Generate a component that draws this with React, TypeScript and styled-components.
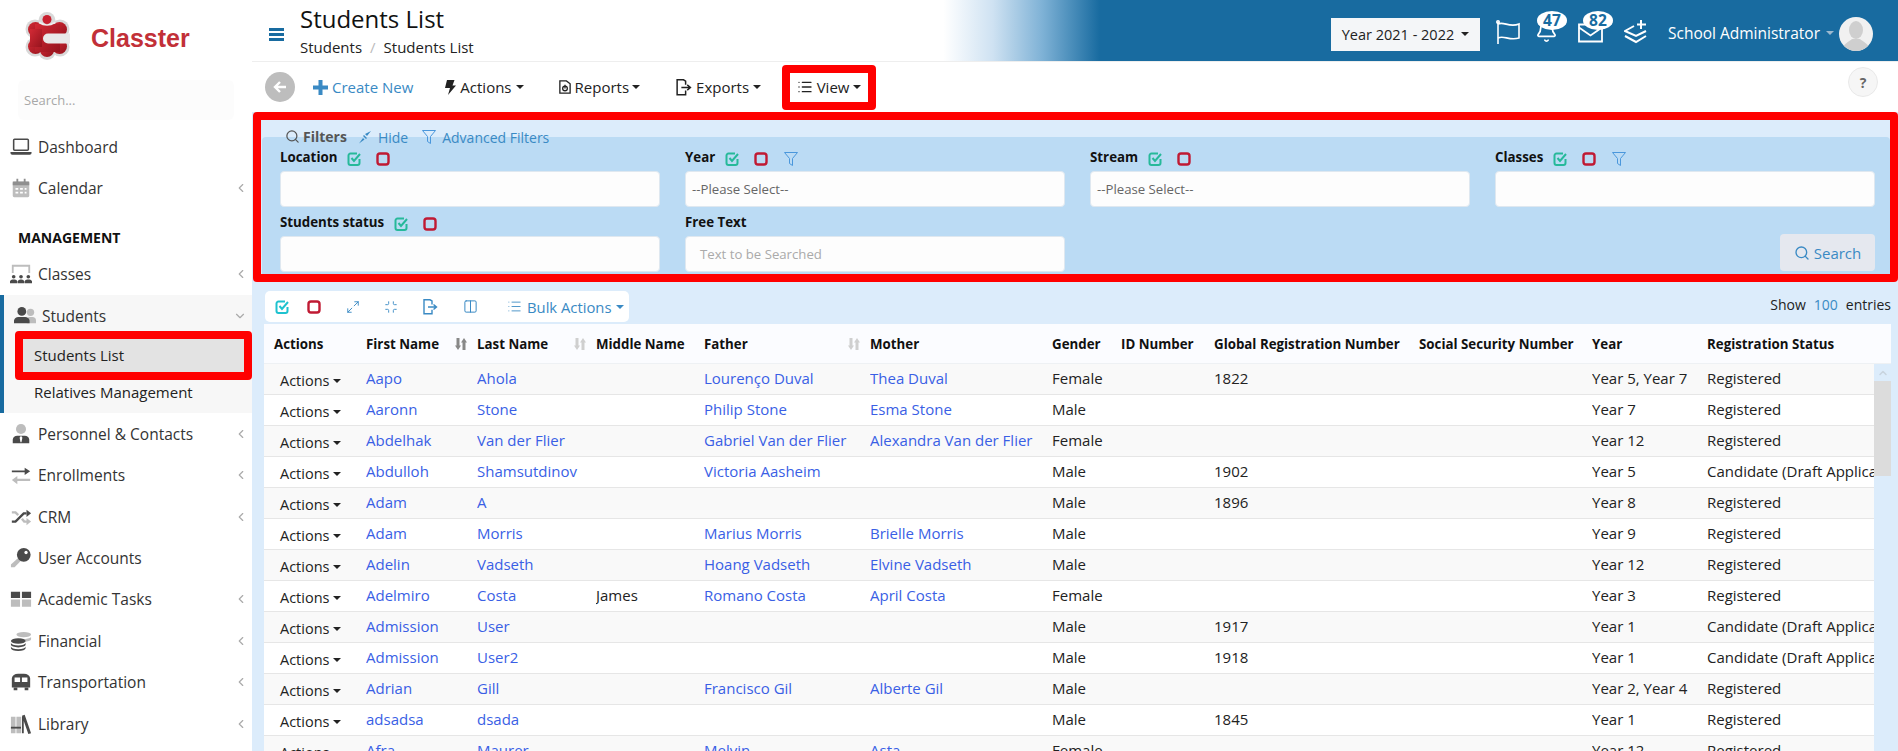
import * as React from 'react'
import styled, { createGlobalStyle } from 'styled-components'
import {
  Bell,
  ChevronDown,
  ChevronLeft,
  ChevronUp,
  Columns2,
  List,
  Maximize2,
  Minimize,
  Search as SearchIcon,
} from 'lucide-react'

const DARK = '#4a4a4a'
const LIGHT = '#bdbdbd'
const BLUE = '#186ba0'
const SKY = '#dcecfb'
const LINKY = '#3a8ac4'

const GlobalStyle = createGlobalStyle`
  html, body { margin: 0; padding: 0; height: 100%; overflow: hidden; }
  body { font-family: "Open Sans", "Liberation Sans", sans-serif; font-size: 14px; color: #222; background: #fff; }
  * { box-sizing: border-box; }
`

const Page = styled.div`
  display: flex;
  width: 1898px;
  height: 751px;
  overflow: hidden;
`

/* ---------- sidebar ---------- */

const Sidebar = styled.aside`
  flex: 0 0 252px;
  background: #fff;
  display: flex;
  flex-direction: column;
`

const Brand = styled.div`
  height: 80px;
  padding: 12px 0 0 25px;
  display: flex;
  align-items: flex-start;
  gap: 21px;
`

const BrandName = styled.span`
  font-family: "Liberation Sans", Arial, sans-serif;
  font-weight: 700;
  font-size: 25px;
  line-height: 52px;
  color: #c23038;
`

const SideSearch = styled.div`
  margin: 0 18px 6px;
  height: 40px;
  border-radius: 6px;
  background: #fcfcfc;
  padding-left: 6px;
  display: flex;
  align-items: center;
  color: #a8a8a8;
  font-size: 13px;
`

const NavItem = styled.div`
  height: 41.4px;
  display: flex;
  align-items: center;
  padding: 0 4px 0 10px;
  font-size: 15.5px;
  color: #333;
`

const NavIcon = styled.svg`
  flex: 0 0 22px;
  width: 22px;
  height: 22px;
  margin-right: 6px;
`

const NavArrow = styled.span`
  margin-left: auto;
  display: flex;
  color: #aaa;
`

const NavHeading = styled.div`
  height: 45px;
  padding: 0 0 7px 18px;
  display: flex;
  align-items: flex-end;
  font-size: 14px;
  font-weight: 700;
  color: #111;
`

const NavGroup = styled.div`
  height: 118px;
  background: #f7f7f7;
  border-left: 4px solid ${BLUE};
`

const GroupHead = styled.div`
  height: 36px;
  display: flex;
  align-items: center;
  padding: 6px 5px 0 10px;
  font-size: 15.5px;
  color: #333;
`

const ActiveSub = styled.div`
  margin-left: 11px;
  width: 237px;
  height: 49px;
  border: 8px solid #f00;
  border-radius: 4px;
  background: #e3e3e3;
  display: flex;
  align-items: center;
  padding: 0 0 2px 11px;
  font-size: 15px;
  color: #222;
`

const SubItem = styled.div`
  height: 33px;
  padding: 0 0 9px 30px;
  display: flex;
  align-items: center;
  font-size: 15px;
  color: #222;
`

/* ---------- top bar ---------- */

const Main = styled.main`
  flex: 1;
  min-width: 0;
  background: ${SKY};
  display: flex;
  flex-direction: column;
`

const TopBar = styled.header`
  height: 62px;
  flex: none;
  display: flex;
  align-items: center;
  padding: 0 25px 1px 17px;
  border-bottom: 1px solid #eee;
  background: linear-gradient(90deg, #fff 42%, #cfe2f2 45%, #7fb2d6 48%, ${BLUE} 51.5%);
`

const Burger = styled.span`
  width: 15px;
  height: 13px;
  margin: 8px 16px 0 0;
  border-top: 3px solid ${BLUE};
  border-bottom: 3px solid ${BLUE};
  position: relative;
  &::after {
    content: '';
    position: absolute;
    left: 0;
    right: 0;
    top: 2px;
    height: 3px;
    background: ${BLUE};
  }
`

const TitleBlock = styled.div`
  align-self: flex-start;
  display: flex;
  flex-direction: column;
`

const PageTitle = styled.h1`
  margin: 0;
  font-size: 24px;
  line-height: 38px;
  font-weight: 400;
  color: #111;
`

const Crumbs = styled.div`
  display: flex;
  font-size: 15px;
  line-height: 20px;
  color: #222;
  margin-top: -1px;
`

const CrumbSep = styled.span`
  color: #bbb;
  margin: 0 8px;
`

const YearSelect = styled.div`
  margin-left: auto;
  width: 149px;
  height: 33px;
  background: #f4f6f8;
  display: flex;
  align-items: center;
  justify-content: center;
  gap: 7px;
  color: #222;
  font-size: 14.5px;
  margin-top: 8px;
`

const Caret = styled.span<{ $color?: string }>`
  display: inline-block;
  width: 0;
  height: 0;
  border-left: 4px solid transparent;
  border-right: 4px solid transparent;
  border-top: 4px solid ${(p) => p.$color || '#222'};
`

const HeadIcon = styled.div<{ $w: number; $ml: number }>`
  position: relative;
  width: ${(p) => p.$w}px;
  height: 24px;
  margin-left: ${(p) => p.$ml}px;
  margin-top: 4px;
  color: #fff;
`

const Badge = styled.span<{ $left: number }>`
  position: absolute;
  left: ${(p) => p.$left}px;
  top: -9px;
  width: 30px;
  height: 19px;
  border-radius: 50%;
  background: #fff;
  color: ${BLUE};
  font-weight: 700;
  font-size: 15.5px;
  line-height: 19px;
  text-align: center;
`

const UserName = styled.span`
  margin: 5px 0 0 20px;
  font-size: 15.5px;
  color: #fff;
  display: flex;
  align-items: center;
  gap: 6px;
  white-space: nowrap;
`

const Avatar = styled.div`
  width: 34px;
  height: 34px;
  margin-left: 5px;
  border-radius: 50%;
  background: #f1f1f1;
  overflow: hidden;
  margin-top: 8px;
`

/* ---------- tool bar ---------- */

const ToolBar = styled.div`
  height: 50px;
  flex: none;
  background: #fff;
  display: flex;
  align-items: center;
  padding-left: 13px;
`

const BackButton = styled.span`
  width: 30px;
  height: 30px;
  border-radius: 50%;
  background: #bdbdbd;
  display: flex;
  align-items: center;
  justify-content: center;
  margin-right: 18px;
`

const ToolItem = styled.span<{ $after: number; $gap?: number; $link?: boolean }>`
  display: inline-flex;
  align-items: center;
  gap: ${(p) => p.$gap || 4}px;
  margin-right: ${(p) => p.$after}px;
  font-size: 15px;
  color: ${(p) => (p.$link ? LINKY : '#222')};
  white-space: nowrap;
`

const ViewBox = styled.div`
  width: 94px;
  height: 45px;
  border: 8px solid #f00;
  border-radius: 4px;
  background: #fff;
  display: flex;
  align-items: center;
  justify-content: center;
  gap: 4px;
  font-size: 15px;
  color: #222;
`

const HelpDot = styled.span`
  margin: 5px 20px 0 auto;
  align-self: flex-start;
  width: 30px;
  height: 30px;
  border-radius: 50%;
  background: #f6f6f6;
  border: 1px solid #e9e9e9;
  display: flex;
  align-items: center;
  justify-content: center;
  font-weight: 700;
  color: #666;
  font-size: 14px;
`

/* ---------- filters ---------- */

const FilterBox = styled.section`
  height: 170px;
  flex: none;
  margin-left: 1px;
  border: 8px solid #f00;
  border-radius: 4px;
  background: ${SKY};
  display: flex;
  flex-direction: column;
`

const FilterTabs = styled.div`
  height: 25px;
  flex: none;
  margin-top: 0;
  padding: 7px 0 0 24px;
  display: flex;
  align-items: center;
  position: relative;
  z-index: 1;
`

const FiltersLabel = styled.span`
  display: inline-flex;
  align-items: center;
  gap: 3px;
  font-weight: 700;
  font-size: 14px;
  color: #555;
`

const TabLink = styled.span<{ $ml: number }>`
  display: inline-flex;
  align-items: center;
  gap: 6px;
  margin-left: ${(p) => p.$ml}px;
  margin-top: 2px;
  font-size: 14px;
  color: ${LINKY};
`

const FilterPanel = styled.div`
  flex: 1;
  margin: -8px 0 0 1px;
  padding: 10px 15px 1px 18px;
  background: #bbdbf4;
  border-radius: 4px 4px 0 0;
  display: grid;
  grid-template-columns: repeat(4, 1fr);
  column-gap: 25px;
  row-gap: 5px;
  align-content: start;
`

const Field = styled.div`
  display: flex;
  flex-direction: column;
  min-width: 0;
`

const FieldHead = styled.div`
  height: 20px;
  margin-bottom: 4px;
  display: flex;
  align-items: center;
  font-weight: 700;
  font-size: 13.3px;
  color: #111;
`

const IconSlot = styled.span<{ $ml: number }>`
  display: inline-flex;
  margin-left: ${(p) => p.$ml}px;
  margin-top: 4px;
`

const Input = styled.div`
  height: 36px;
  border-radius: 4px;
  background: #fdfdfd;
  border: 1px solid #dfe8f0;
  display: flex;
  align-items: center;
  font-size: 13.2px;
`

const Placeholder = styled.span<{ $pl: number; $color: string }>`
  padding-left: ${(p) => p.$pl}px;
  color: ${(p) => p.$color};
`

const SearchButton = styled.span`
  align-self: flex-end;
  margin: auto 0 1px;
  width: 95px;
  height: 37px;
  border-radius: 4px;
  background: #e5e8ef;
  display: flex;
  align-items: center;
  justify-content: center;
  gap: 4px;
  font-size: 15px;
  color: ${LINKY};
`

/* ---------- table ---------- */

const ListTools = styled.div`
  flex: none;
  margin-top: 9px;
  padding: 0 7px 0 13px;
  height: 33px;
  display: flex;
  align-items: flex-start;
`

const ToolCard = styled.div`
  width: 364px;
  height: 31px;
  background: #fff;
  border-radius: 5px;
  padding-left: 10px;
  display: flex;
  align-items: center;
  color: ${LINKY};
`

const CardIcon = styled.span<{ $w: number }>`
  width: ${(p) => p.$w}px;
  display: inline-flex;
`

const BulkLabel = styled.span`
  display: inline-flex;
  align-items: center;
  gap: 5px;
  font-size: 14.8px;
`

const ShowEntries = styled.div`
  margin-left: auto;
  font-size: 14px;
  line-height: 28px;
  color: #222;
  display: flex;
  gap: 8px;
`

const ShowCount = styled.span`
  color: ${LINKY};
`

const TableWrap = styled.div`
  flex: 1;
  min-height: 0;
  margin: 0 7px 0 12px;
  display: flex;
  flex-direction: column;
`

const COLS = '102px 111px 119px 108px 166px 182px 69px 93px 205px 173px 115px 167px'

const HeaderRow = styled.div`
  flex: none;
  height: 40px;
  display: grid;
  grid-template-columns: ${COLS};
  background: #fbfcff;
  border-bottom: 1px solid #eef1f4;
  font-weight: 700;
  font-size: 13.3px;
  color: #111;
`

const HeadCell = styled.div<{ $pl?: number }>`
  display: flex;
  align-items: center;
  justify-content: space-between;
  padding: 0 10px 0 ${(p) => p.$pl || 0}px;
  white-space: nowrap;
`

const BodyWrap = styled.div`
  flex: 1;
  min-height: 0;
  display: flex;
  overflow: hidden;
`

const Rows = styled.div`
  width: 1610px;
  flex: none;
  overflow: hidden;
`

const Row = styled.div<{ $odd: boolean }>`
  height: 31px;
  display: grid;
  grid-template-columns: ${COLS};
  align-items: center;
  background: ${(p) => (p.$odd ? '#f9f9f9' : '#fff')};
  border-bottom: 1px solid #e6e6e6;
  font-size: 15px;
  color: #222;
`

const Cell = styled.div`
  white-space: nowrap;
  overflow: hidden;
  padding-bottom: 2px;
`

const LinkCell = styled(Cell)`
  color: #3a5fe5;
`

const ActionCell = styled.div`
  padding: 3px 0 0 16px;
  display: flex;
  align-items: center;
  gap: 4px;
  font-size: 14.5px;
  color: #222;
`

const ScrollTrack = styled.div`
  flex: 1;
  background: ${SKY};
  display: flex;
  flex-direction: column;
`

const ScrollUp = styled.span`
  height: 17px;
  display: flex;
  align-items: center;
  justify-content: center;
  color: #c8d4de;
`

const ScrollThumb = styled.div`
  height: 95px;
  background: #dcdcdc;
`

const Glyph = styled.svg<{ $w?: number }>`
  width: ${(p) => p.$w || 14}px;
  height: ${(p) => p.$w || 14}px;
  flex: none;
`

const BoltGlyph = styled.svg`
  width: 11px;
  height: 15px;
  flex: none;
`

/* ---------- drawn icons ---------- */

const Logo = () => (
  <svg width="45" height="48" viewBox="0 0 45 48">
    <defs>
      <linearGradient id="lg" x1="0" y1="0" x2="1" y2="1">
        <stop offset="0" stopColor="#d22a35" />
        <stop offset="1" stopColor="#96141e" />
      </linearGradient>
    </defs>
    <g fill="#d9d9d9">
      <circle cx="22" cy="8.500" r="8.500" />
      <circle cx="10" cy="17" r="9.500" />
      <circle cx="35" cy="17" r="9.500" />
      <circle cx="10" cy="35" r="9.500" />
      <circle cx="35" cy="35" r="9.500" />
      <circle cx="22" cy="39" r="9" />
      <rect x="5" y="12" width="34" height="26" />
    </g>
    <g fill="url(#lg)">
      <circle cx="10.500" cy="17.500" r="7.500" />
      <circle cx="34.500" cy="17.500" r="7.500" />
      <circle cx="10.500" cy="34.500" r="7.500" />
      <circle cx="34.500" cy="34.500" r="7.500" />
      <circle cx="22" cy="38" r="7" />
      <rect x="10" y="12" width="25" height="28" />
      <rect x="5" y="17" width="12" height="18" />
    </g>
    <path d="M14 10.500 q8 5 16 0" fill="none" stroke="#eee" strokeWidth="1.600" />
    <circle cx="22" cy="7.500" r="4.500" fill="#c8202f" />
    <path d="M45 21.500 H23 a5 5 0 0 0 0 10 H45 Z" fill="#e9e9e9" />
  </svg>
)

const icons: Record<string, React.ReactNode> = {
  laptop: (
    <>
      <rect x="4" y="3.500" width="16" height="12" rx="1" fill="none" stroke={DARK} strokeWidth="1.700" />
      <path d="M0.500 17.500 h23 v1 a2 2 0 0 1 -2 2 h-19 a2 2 0 0 1 -2 -2 z" fill={DARK} />
    </>
  ),
  calendar: (
    <>
      <rect x="3" y="5" width="18" height="17" rx="1.500" fill={LIGHT} />
      <path d="M3 5 h18 v4 h-18 z" fill="#8f8f8f" />
      <path d="M7 2 h2 v5 h-2 z M15 2 h2 v5 h-2 z" fill="#8f8f8f" />
      <path d="M6 12 h3 v2 h-3 z M11 12 h3 v2 h-3 z M16 12 h2 v2 h-2 z M6 16 h3 v2 h-3 z M11 16 h3 v2 h-3 z M16 16 h2 v2 h-2 z" fill="#fff" />
    </>
  ),
  classes: (
    <>
      <path d="M3 11 v-8 h18 v8" fill="none" stroke={LIGHT} strokeWidth="2" />
      <circle cx="4" cy="15" r="2" fill={DARK} />
      <circle cx="12" cy="15" r="2" fill={DARK} />
      <circle cx="20" cy="15" r="2" fill={DARK} />
      <path d="M0 22 v-2 a3 3 0 0 1 3 -2 h2 a3 3 0 0 1 3 2 v2 z M8.500 22 v-2 a3 3 0 0 1 3 -2 h1 a3 3 0 0 1 3 2 v2 z M16 22 v-2 a3 3 0 0 1 3 -2 h2 a3 3 0 0 1 3 2 v2 z" fill={DARK} />
    </>
  ),
  students: (
    <>
      <circle cx="18" cy="8" r="4" fill={LIGHT} />
      <path d="M14 20 v-3 a4 4 0 0 1 2 -4 h4 a4 4 0 0 1 4 4 v3 z" fill={LIGHT} />
      <circle cx="8.500" cy="7" r="4.800" fill={DARK} />
      <path d="M0 20 v-3 a5 5 0 0 1 5 -4 h7 a5 5 0 0 1 5 4 v3 z" fill={DARK} />
    </>
  ),
  personnel: (
    <>
      <circle cx="12" cy="6.500" r="5.500" fill={LIGHT} />
      <path d="M3 22 v-4 a5 5 0 0 1 5 -4 h8 a5 5 0 0 1 5 4 v4 z" fill={DARK} />
      <path d="M12 14 l1.500 2 -1 5 h-1 l-1 -5 z" fill="#fff" />
    </>
  ),
  enrollments: (
    <>
      <path d="M2 7 h14 v-3 l6 4 -6 4 v-3 h-14 z" fill={DARK} />
      <path d="M22 16 h-14 v-3 l-6 4.500 6 4.500 v-3.500 h14 z" fill={LIGHT} />
    </>
  ),
  crm: (
    <>
      <path d="M2 7 h4 l3 3 M13 14 l2.500 3 h3" fill="none" stroke={LIGHT} strokeWidth="2.600" />
      <path d="M18 13 l5 4 -5 4 z" fill={LIGHT} />
      <path d="M2 17 h4 l9 -9 h3" fill="none" stroke={DARK} strokeWidth="2.600" />
      <path d="M18 4 l5 4 -5 4 z" fill={DARK} />
    </>
  ),
  key: (
    <>
      <path d="M10 11 l3 3 -8 8 h-4 v-3 z" fill={LIGHT} />
      <circle cx="15" cy="8.500" r="7.500" fill={DARK} />
      <circle cx="17.500" cy="6" r="1.800" fill="#fff" />
    </>
  ),
  tasks: (
    <>
      <path d="M1 4 h10 v7 h-10 z M13 4 h10 v7 h-10 z" fill={DARK} />
      <path d="M1 12.500 h10 v8 h-10 z M13 12.500 h10 v8 h-10 z" fill={LIGHT} />
    </>
  ),
  coins: (
    <>
      <ellipse cx="15" cy="5" rx="8" ry="2.800" fill={LIGHT} />
      <path d="M10 9 a8 3 0 0 0 13 -1 v2 a8 3 0 0 1 -8 3 z" fill={LIGHT} />
      <ellipse cx="9" cy="12" rx="8" ry="3" fill={DARK} />
      <path d="M1 14 a8 3 0 0 0 16 0 v2 a8 3 0 0 1 -16 0 z M1 18 a8 3 0 0 0 16 0 v2 a8 3 0 0 1 -16 0 z" fill={DARK} />
    </>
  ),
  bus: (
    <>
      <path d="M2 8 a7 6 0 0 1 7 -5 h6 a7 6 0 0 1 7 5 v10 h-20 z" fill={DARK} />
      <path d="M5 7 h6 v5 h-6 z M13 7 h6 v5 h-6 z" fill="#fff" />
      <path d="M4 18 h4 v3 h-4 z M16 18 h4 v3 h-4 z" fill={DARK} />
    </>
  ),
  library: (
    <>
      <path d="M1 4 h5 v18 h-5 z M7 4 h5 v18 h-5 z" fill={LIGHT} />
      <path d="M1 15 h11 v2 h-11 z" fill={DARK} />
      <path d="M13 3 l3 -1 7 20 -3 1 z M13 4 h2 v18 h-2 z" fill={DARK} />
    </>
  ),
}

const SideIcon = ({ name }: { name: string }) => <NavIcon viewBox="0 0 24 24">{icons[name]}</NavIcon>

const CheckMark = ({ color = '#26b99a' }: { color?: string }) => (
  <Glyph viewBox="0 0 14 14" fill="none">
    <path d="M12.500 7 v4 a2 2 0 0 1 -2 2 h-7 a2 2 0 0 1 -2 -2 v-7.500 a2 2 0 0 1 2 -2 h6.500" stroke={color} strokeWidth="2" />
    <path d="M4.500 6 l2.500 3 l6 -7" stroke={color} strokeWidth="2" />
  </Glyph>
)

const RedBox = () => (
  <Glyph viewBox="0 0 14 14" fill="none">
    <rect x="1.500" y="1.500" width="11" height="11" rx="2.500" stroke="#c01a33" strokeWidth="2.400" />
  </Glyph>
)

const Funnel = ({ color = '#4a97dc', size = 14 }: { color?: string; size?: number }) => (
  <Glyph $w={size} viewBox="0 0 14 14" fill="none">
    <path d="M0.500 0.500 h13 l-5 6 v7 l-3 -2 v-5 z" stroke={color} strokeWidth="1" />
  </Glyph>
)

const SortArrows = ({ color = '#cfcfcf' }: { color?: string }) => (
  <Glyph $w={12} viewBox="0 0 12 12" fill={color}>
    <path d="M1.500 0 h3 v7.500 h1.500 l-3 4.500 -3 -4.500 h1.500 z" />
    <path d="M7.500 12 h3 v-7.500 h1.500 l-3 -4.500 -3 4.500 h1.500 z" />
  </Glyph>
)

const Pin = () => (
  <Glyph viewBox="0 0 14 14" fill={LINKY}>
    <path d="M13 1 l-4 5 -2 -2 z M6 5 l3 3 -1 1 -3 -3 z M5 8 l1.500 1.500 -5.500 4 z" />
  </Glyph>
)

const FileExport = ({ color = '#222', size = 17 }: { color?: string; size?: number }) => (
  <Glyph $w={size} viewBox="0 0 16 16" fill="none" stroke={color} strokeWidth="1.400">
    <path d="M10 5.500 V2 l-2 -1.200 h-6 v14 h8 v-4" />
    <path d="M6 8 h8 M11.500 5.500 l3 2.500 -3 2.500" />
  </Glyph>
)

const ReportFile = () => (
  <Glyph $w={14} viewBox="0 0 15 15" fill="none" stroke="#222" strokeWidth="1.400">
    <path d="M2 1 h7 l4 3 v10 h-11 z" />
    <circle cx="7.500" cy="9" r="2.500" />
    <path d="M7.500 9 v-4" />
  </Glyph>
)

const Bolt = () => (
  <BoltGlyph viewBox="0 0 11 15" fill="#222">
    <path d="M2 0 h7.500 l-2 5.500 h3.500 l-8 9.500 2 -7 h-5 z" />
  </BoltGlyph>
)

const rowsData: string[][] = [
  ['Aapo', 'Ahola', '', 'Lourenço Duval', 'Thea Duval', 'Female', '', '1822', '', 'Year 5, Year 7', 'Registered'],
  ['Aaronn', 'Stone', '', 'Philip Stone', 'Esma Stone', 'Male', '', '', '', 'Year 7', 'Registered'],
  ['Abdelhak', 'Van der Flier', '', 'Gabriel Van der Flier', 'Alexandra Van der Flier', 'Female', '', '', '', 'Year 12', 'Registered'],
  ['Abdulloh', 'Shamsutdinov', '', 'Victoria Aasheim', '', 'Male', '', '1902', '', 'Year 5', 'Candidate (Draft Application)'],
  ['Adam', 'A', '', '', '', 'Male', '', '1896', '', 'Year 8', 'Registered'],
  ['Adam', 'Morris', '', 'Marius Morris', 'Brielle Morris', 'Male', '', '', '', 'Year 9', 'Registered'],
  ['Adelin', 'Vadseth', '', 'Hoang Vadseth', 'Elvine Vadseth', 'Male', '', '', '', 'Year 12', 'Registered'],
  ['Adelmiro', 'Costa', 'James', 'Romano Costa', 'April Costa', 'Female', '', '', '', 'Year 3', 'Registered'],
  ['Admission', 'User', '', '', '', 'Male', '', '1917', '', 'Year 1', 'Candidate (Draft Application)'],
  ['Admission', 'User2', '', '', '', 'Male', '', '1918', '', 'Year 1', 'Candidate (Draft Application)'],
  ['Adrian', 'Gill', '', 'Francisco Gil', 'Alberte Gil', 'Male', '', '', '', 'Year 2, Year 4', 'Registered'],
  ['adsadsa', 'dsada', '', '', '', 'Male', '', '1845', '', 'Year 1', 'Registered'],
  ['Afra', 'Maurer', '', 'Melvin', 'Asta', 'Female', '', '', '', 'Year 12', 'Registered'],
]

const linkColumns = [0, 1, 3, 4]

const navTop = [
  { icon: 'laptop', label: 'Dashboard' },
  { icon: 'calendar', label: 'Calendar', arrow: true },
]

const navBottom = [
  { icon: 'personnel', label: 'Personnel & Contacts', arrow: true },
  { icon: 'enrollments', label: 'Enrollments', arrow: true },
  { icon: 'crm', label: 'CRM', arrow: true },
  { icon: 'key', label: 'User Accounts' },
  { icon: 'tasks', label: 'Academic Tasks', arrow: true },
  { icon: 'coins', label: 'Financial', arrow: true },
  { icon: 'bus', label: 'Transportation', arrow: true },
  { icon: 'library', label: 'Library', arrow: true },
]

const Nav = ({ icon, label, arrow }: { icon: string; label: string; arrow?: boolean }) => (
  <NavItem>
    <SideIcon name={icon} />
    {label}
    {arrow && (
      <NavArrow>
        <ChevronLeft size={14} />
      </NavArrow>
    )}
  </NavItem>
)

export default function App() {
  return (
    <Page>
      <GlobalStyle />
      <Sidebar>
        <Brand>
          <Logo />
          <BrandName>Classter</BrandName>
        </Brand>
        <SideSearch>Search...</SideSearch>
        {navTop.map((n) => (
          <Nav key={n.label} {...n} />
        ))}
        <NavHeading>MANAGEMENT</NavHeading>
        <Nav icon="classes" label="Classes" arrow />
        <NavGroup>
          <GroupHead>
            <SideIcon name="students" />
            Students
            <NavArrow>
              <ChevronDown size={14} />
            </NavArrow>
          </GroupHead>
          <ActiveSub>Students List</ActiveSub>
          <SubItem>Relatives Management</SubItem>
        </NavGroup>
        {navBottom.map((n) => (
          <Nav key={n.label} {...n} />
        ))}
      </Sidebar>

      <Main>
        <TopBar>
          <Burger />
          <TitleBlock>
            <PageTitle>Students List</PageTitle>
            <Crumbs>
              Students<CrumbSep>/</CrumbSep>Students List
            </Crumbs>
          </TitleBlock>
          <YearSelect>
            Year 2021 - 2022 <Caret />
          </YearSelect>
          <HeadIcon $w={24} $ml={16}>
            <Glyph $w={24} viewBox="0 0 24 24" fill="none" stroke="#fff" strokeWidth="1.600">
              <path d="M2 2 V24" />
              <circle cx="2" cy="2" r="1.200" />
              <path d="M2 4 C8 1 13 8 23 4 V18 C13 21 8 15 2 18" />
            </Glyph>
          </HeadIcon>
          <HeadIcon $w={22} $ml={15}>
            <Bell size={23} strokeWidth={1.8} />
            <Badge $left={2}>47</Badge>
          </HeadIcon>
          <HeadIcon $w={25} $ml={21}>
            <Glyph $w={25} viewBox="0 0 25 24" fill="none" stroke="#fff" strokeWidth="1.800">
              <path d="M1 4 H24 V21 H1 Z" />
              <path d="M1 7 L12.500 15 L24 7" />
            </Glyph>
            <Badge $left={5}>82</Badge>
          </HeadIcon>
          <HeadIcon $w={24} $ml={21}>
            <Glyph $w={24} viewBox="0 0 24 24" fill="none" stroke="#fff" strokeWidth="2">
              <path d="M17 0 V9 M13 4.500 H22" />
              <path d="M10 6 L1 11 L12 16 L22 11" />
              <path d="M1 16 L12 22 L22 16" />
            </Glyph>
          </HeadIcon>
          <UserName>
            School Administrator <Caret $color="#9db9cf" />
          </UserName>
          <Avatar>
            <svg width="34" height="34" viewBox="0 0 34 34">
              <ellipse cx="17" cy="13" rx="7" ry="9" fill="#cfcfcf" />
              <path d="M3 34 c1 -8 7 -9 10 -12 h8 c3 3 9 4 10 12 z" fill="#cfcfcf" />
            </svg>
          </Avatar>
        </TopBar>

        <ToolBar>
          <BackButton>
            <svg width="16" height="16" viewBox="0 0 16 16" fill="none" stroke="#fff" strokeWidth="2.400">
              <path d="M14 8 H3 M8 3 L3 8 L8 13" />
            </svg>
          </BackButton>
          <ToolItem $after={32} $link>
            <Glyph $w={15} viewBox="0 0 15 15" fill={LINKY}>
              <path d="M5.500 0 h4 v5.500 h5.500 v4 h-5.500 v5.500 h-4 v-5.500 h-5.500 v-4 h5.500 z" />
            </Glyph>
            Create New
          </ToolItem>
          <ToolItem $after={34}>
            <Bolt />
            Actions <Caret />
          </ToolItem>
          <ToolItem $after={35} $gap={3}>
            <ReportFile />
            Reports <Caret />
          </ToolItem>
          <ToolItem $after={21}>
            <FileExport />
            Exports <Caret />
          </ToolItem>
          <ViewBox>
            <List size={16} color="#222" />
            View <Caret />
          </ViewBox>
          <HelpDot>?</HelpDot>
        </ToolBar>

        <FilterBox>
          <FilterTabs>
            <FiltersLabel>
              <SearchIcon size={15} color="#555" />
              Filters
            </FiltersLabel>
            <TabLink $ml={11}>
              <Pin />
              Hide
            </TabLink>
            <TabLink $ml={14}>
              <Funnel size={14} />
              Advanced Filters
            </TabLink>
          </FilterTabs>
          <FilterPanel>
            <Field>
              <FieldHead>
                Location
                <IconSlot $ml={10}>
                  <CheckMark />
                </IconSlot>
                <IconSlot $ml={15}>
                  <RedBox />
                </IconSlot>
              </FieldHead>
              <Input />
            </Field>
            <Field>
              <FieldHead>
                Year
                <IconSlot $ml={10}>
                  <CheckMark />
                </IconSlot>
                <IconSlot $ml={15}>
                  <RedBox />
                </IconSlot>
                <IconSlot $ml={16}>
                  <Funnel />
                </IconSlot>
              </FieldHead>
              <Input>
                <Placeholder $pl={6} $color="#666">
                  --Please Select--
                </Placeholder>
              </Input>
            </Field>
            <Field>
              <FieldHead>
                Stream
                <IconSlot $ml={10}>
                  <CheckMark />
                </IconSlot>
                <IconSlot $ml={15}>
                  <RedBox />
                </IconSlot>
              </FieldHead>
              <Input>
                <Placeholder $pl={6} $color="#666">
                  --Please Select--
                </Placeholder>
              </Input>
            </Field>
            <Field>
              <FieldHead>
                Classes
                <IconSlot $ml={10}>
                  <CheckMark />
                </IconSlot>
                <IconSlot $ml={15}>
                  <RedBox />
                </IconSlot>
                <IconSlot $ml={16}>
                  <Funnel />
                </IconSlot>
              </FieldHead>
              <Input />
            </Field>
            <Field>
              <FieldHead>
                Students status
                <IconSlot $ml={10}>
                  <CheckMark />
                </IconSlot>
                <IconSlot $ml={15}>
                  <RedBox />
                </IconSlot>
              </FieldHead>
              <Input />
            </Field>
            <Field>
              <FieldHead>Free Text</FieldHead>
              <Input>
                <Placeholder $pl={14} $color="#aaa">
                  Text to be Searched
                </Placeholder>
              </Input>
            </Field>
            <Field />
            <Field>
              <SearchButton>
                <SearchIcon size={16} color={LINKY} />
                Search
              </SearchButton>
            </Field>
          </FilterPanel>
        </FilterBox>

        <ListTools>
          <ToolCard>
            <CardIcon $w={32}>
              <CheckMark color="#1ec2cf" />
            </CardIcon>
            <CardIcon $w={39}>
              <RedBox />
            </CardIcon>
            <CardIcon $w={38}>
              <Maximize2 size={14} strokeWidth={1.6} />
            </CardIcon>
            <CardIcon $w={38}>
              <Minimize size={14} strokeWidth={1.6} />
            </CardIcon>
            <CardIcon $w={41}>
              <FileExport color={LINKY} size={16} />
            </CardIcon>
            <CardIcon $w={44}>
              <Columns2 size={15} strokeWidth={1.6} />
            </CardIcon>
            <BulkLabel>
              <List size={15} strokeWidth={1.4} />
              Bulk Actions <Caret $color={LINKY} />
            </BulkLabel>
          </ToolCard>
          <ShowEntries>
            Show <ShowCount>100</ShowCount> entries
          </ShowEntries>
        </ListTools>

        <TableWrap>
          <HeaderRow>
            <HeadCell $pl={10}>Actions</HeadCell>
            <HeadCell>
              First Name <SortArrows color="#888" />
            </HeadCell>
            <HeadCell>
              Last Name <SortArrows />
            </HeadCell>
            <HeadCell>Middle Name</HeadCell>
            <HeadCell>
              Father <SortArrows />
            </HeadCell>
            <HeadCell>Mother</HeadCell>
            <HeadCell>Gender</HeadCell>
            <HeadCell>ID Number</HeadCell>
            <HeadCell>Global Registration Number</HeadCell>
            <HeadCell>Social Security Number</HeadCell>
            <HeadCell>Year</HeadCell>
            <HeadCell>Registration Status</HeadCell>
          </HeaderRow>
          <BodyWrap>
            <Rows>
              {rowsData.map((row, i) => (
                <Row key={i} $odd={i % 2 === 0}>
                  <ActionCell>
                    Actions <Caret />
                  </ActionCell>
                  {row.map((value, c) =>
                    linkColumns.includes(c) ? (
                      <LinkCell key={c}>{value}</LinkCell>
                    ) : (
                      <Cell key={c}>{value}</Cell>
                    ),
                  )}
                </Row>
              ))}
            </Rows>
            <ScrollTrack>
              <ScrollUp>
                <ChevronUp size={12} strokeWidth={3} />
              </ScrollUp>
              <ScrollThumb />
            </ScrollTrack>
          </BodyWrap>
        </TableWrap>
      </Main>
    </Page>
  )
}
